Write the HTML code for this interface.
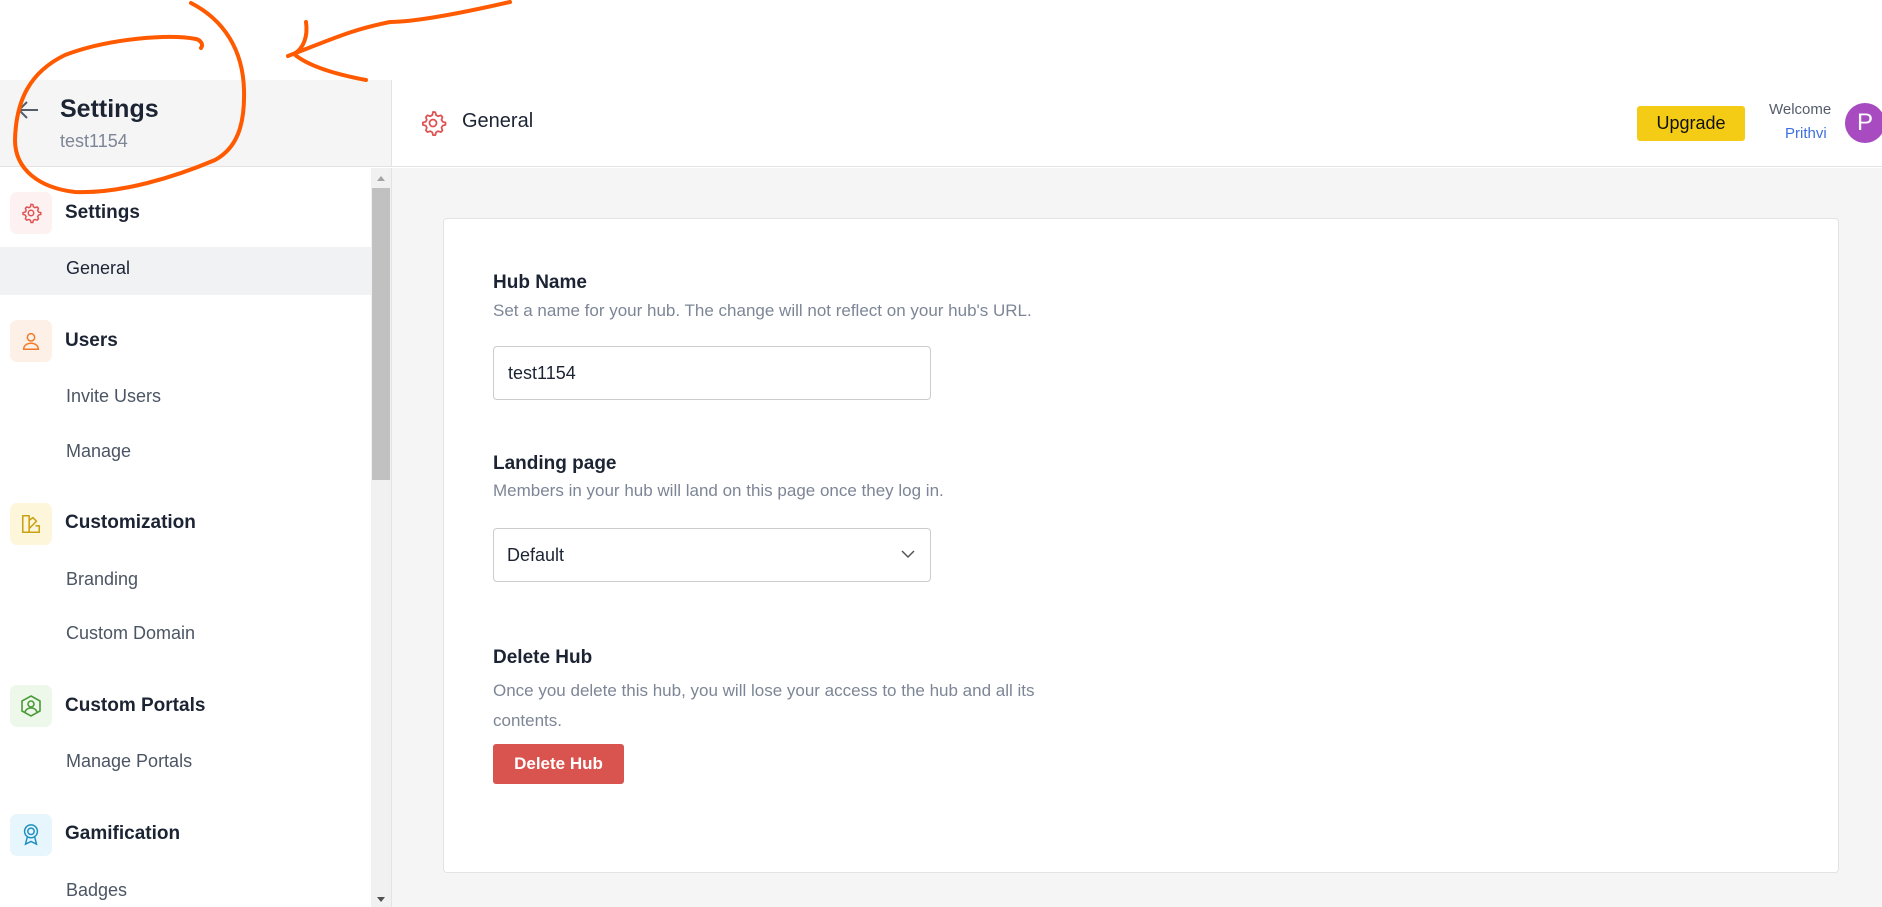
<!DOCTYPE html>
<html><head><style>
*{box-sizing:border-box;margin:0;padding:0}
body{width:1882px;height:907px;overflow:hidden;background:#fff;font-family:"Liberation Sans",sans-serif;position:relative;color:#1f2937}
.a{position:absolute;white-space:nowrap}
.ib{position:absolute;left:10px;width:42px;height:42px;border-radius:7px;display:flex;align-items:center;justify-content:center}
.h{position:absolute;left:65px;font-size:19px;font-weight:bold;color:#1c2434}
.s{position:absolute;left:66px;font-size:18px;color:#4b5563}
</style></head><body>
<div class="a" style="left:0;top:80px;width:392px;height:87px;background:#f5f5f5;border-bottom:1px solid #e3e3e3;border-right:1px solid #e3e3e3"></div>
<svg class="a" style="left:16px;top:99px" width="26" height="22" viewBox="0 0 26 22"><path d="M22 11H4M11 3L3 11l8 8" stroke="#555d6b" stroke-width="2" fill="none"/></svg>
<div class="a" style="left:60px;top:95px;font-size:25px;font-weight:bold;color:#1c2434">Settings</div>
<div class="a" style="left:60px;top:131px;font-size:18px;color:#7d8696">test1154</div>
<div class="a" style="left:392px;top:80px;width:1490px;height:87px;background:#fff;border-bottom:1px solid #e3e3e3"></div>
<svg class="a" style="left:419px;top:109px" width="28" height="28" viewBox="0 0 24 24"><path d="M12 2.5l2 .3.6 2.4 1.7 1 2.4-.8 1.4 1.5-.8 2.4 1 1.7 2.4.6v2l-2.4.6-1 1.7.8 2.4-1.4 1.5-2.4-.8-1.7 1-.6 2.4h-2l-.6-2.4-1.7-1-2.4.8-1.4-1.5.8-2.4-1-1.7-2.4-.6v-2l2.4-.6 1-1.7-.8-2.4 1.4-1.5 2.4.8 1.7-1 .6-2.4z" fill="none" stroke="#e05252" stroke-width="1.5" stroke-linejoin="round"/><circle cx="12" cy="12" r="3" fill="none" stroke="#e05252" stroke-width="1.5"/></svg>
<div class="a" style="left:462px;top:110px;font-size:20px;color:#1c2434">General</div>
<div class="a" style="left:1637px;top:106px;width:108px;height:35px;background:#f4cc16;border-radius:3px;font-size:18px;color:#111;text-align:center;line-height:35px">Upgrade</div>
<div class="a" style="left:1769px;top:101px;font-size:15px;color:#555d6b">Welcome</div>
<div class="a" style="left:1785px;top:125px;font-size:15px;color:#3f6fe0">Prithvi</div>
<div class="a" style="left:1845px;top:103px;width:40px;height:40px;border-radius:50%;background:#a84bc0;color:#fff;font-size:24px;line-height:40px;text-align:center">P</div>
<div class="a" style="left:392px;top:168px;width:1490px;height:739px;background:#f5f5f5"></div>
<div class="a" style="left:443px;top:218px;width:1396px;height:655px;background:#fff;border:1px solid #e3e3e3;border-radius:4px"></div>
<div class="a" style="left:493px;top:272px;font-size:19px;font-weight:bold;color:#1c2434">Hub Name</div>
<div class="a" style="left:493px;top:301px;font-size:17px;color:#7d8696">Set a name for your hub. The change will not reflect on your hub's URL.</div>
<div class="a" style="left:493px;top:346px;width:438px;height:54px;border:1px solid #ccc;border-radius:4px;font-size:18px;line-height:52px;padding-left:14px;color:#1c2434">test1154</div>
<div class="a" style="left:493px;top:453px;font-size:19px;font-weight:bold;color:#1c2434">Landing page</div>
<div class="a" style="left:493px;top:481px;font-size:17px;color:#7d8696">Members in your hub will land on this page once they log in.</div>
<div class="a" style="left:493px;top:528px;width:438px;height:54px;border:1px solid #ccc;border-radius:4px;font-size:18px;line-height:52px;padding-left:13px;color:#1c2434">Default</div>
<svg class="a" style="left:900px;top:548px" width="16" height="12" viewBox="0 0 16 12"><path d="M2 3l6 6 6-6" stroke="#555" stroke-width="1.5" fill="none"/></svg>
<div class="a" style="left:493px;top:647px;font-size:19px;font-weight:bold;color:#1c2434">Delete Hub</div>
<div class="a" style="left:493px;top:676px;font-size:17px;color:#7d8696;line-height:30px">Once you delete this hub, you will lose your access to the hub and all its<br>contents.</div>
<div class="a" style="left:493px;top:744px;width:131px;height:40px;background:#d9534f;border-radius:3px;color:#fff;font-size:17px;font-weight:bold;text-align:center;line-height:40px">Delete Hub</div>
<div class="a" style="left:0;top:168px;width:392px;height:739px;background:#fff;border-right:1px solid #e3e3e3"></div>
<div class="a" style="left:371px;top:168px;width:20px;height:739px;background:#f1f1f1"></div>
<div class="a" style="left:372px;top:188px;width:18px;height:292px;background:#c1c1c1"></div>
<svg class="a" style="left:375px;top:174px" width="12" height="8"><path d="M2 7L6 2l4 5z" fill="#a3a3a3"/></svg>
<svg class="a" style="left:375px;top:896px" width="12" height="8"><path d="M2 1l4 5 4-5z" fill="#505050"/></svg>
<div class="a" style="left:0;top:247px;width:371px;height:48px;background:#f1f2f4"></div>

<div class="ib" style="top:192px;background:#fdf1f1"><svg width="22" height="22" viewBox="0 0 24 24"><path d="M12 2.5l2 .3.6 2.4 1.7 1 2.4-.8 1.4 1.5-.8 2.4 1 1.7 2.4.6v2l-2.4.6-1 1.7.8 2.4-1.4 1.5-2.4-.8-1.700 1-.6 2.4h-2l-.6-2.4-1.7-1-2.4.8-1.4-1.5.8-2.4-1-1.7-2.4-.6v-2l2.4-.6 1-1.7-.8-2.4 1.4-1.5 2.4.8 1.7-1 .6-2.4z" fill="none" stroke="#e05252" stroke-width="1.6"/><circle cx="12" cy="12" r="3" fill="none" stroke="#e05252" stroke-width="1.6"/></svg></div>
<div class="h" style="top:202px">Settings</div>
<div class="s" style="top:258px;color:#1c2434">General</div>

<div class="ib" style="top:320px;background:#fdf0e6"><svg width="22" height="22" viewBox="0 0 24 24"><circle cx="12" cy="8" r="4" fill="none" stroke="#f07a2a" stroke-width="1.6"/><path d="M4 21c0-4 3.5-6.5 8-6.5s8 2.5 8 6.5z" fill="none" stroke="#f07a2a" stroke-width="1.6"/></svg></div>
<div class="h" style="top:330px">Users</div>
<div class="s" style="top:386px">Invite Users</div>
<div class="s" style="top:441px">Manage</div>

<div class="ib" style="top:503px;background:#fdf6da"><svg width="22" height="22" viewBox="0 0 24 24"><path d="M3 3h7v18H3zM10 8l4-3 4 4-8 8M10 21h11v-7h-4" fill="none" stroke="#c9a112" stroke-width="1.7" stroke-linejoin="round"/></svg></div>
<div class="h" style="top:512px">Customization</div>
<div class="s" style="top:569px">Branding</div>
<div class="s" style="top:623px">Custom Domain</div>

<div class="ib" style="top:685px;background:#eef8ea"><svg width="24" height="24" viewBox="0 0 24 24"><path d="M12 2l9 5v10l-9 5-9-5V7z" fill="none" stroke="#4a9b3a" stroke-width="1.6"/><circle cx="12" cy="10" r="3" fill="none" stroke="#4a9b3a" stroke-width="1.6"/><path d="M6 18c1-3 3.5-4 6-4s5 1 6 4" fill="none" stroke="#4a9b3a" stroke-width="1.6"/></svg></div>
<div class="h" style="top:695px">Custom Portals</div>
<div class="s" style="top:751px">Manage Portals</div>

<div class="ib" style="top:814px;background:#e7f6fc"><svg width="22" height="24" viewBox="0 0 24 26"><circle cx="12" cy="9" r="7" fill="none" stroke="#1f8fc0" stroke-width="1.6"/><circle cx="12" cy="9" r="3.5" fill="none" stroke="#1f8fc0" stroke-width="1.6"/><path d="M8 15l-2 8 6-3 6 3-2-8" fill="none" stroke="#1f8fc0" stroke-width="1.6"/></svg></div>
<div class="h" style="top:823px">Gamification</div>
<div class="s" style="top:880px">Badges</div>

<svg class="a" style="left:0;top:0" width="560" height="220" viewBox="0 0 560 220"><g fill="none" stroke="#ff5a00" stroke-width="4" stroke-linecap="round" stroke-linejoin="round"><path d="M201 48C204 44 200 40 196 39 170 34 110 38 65 55 30 72 16 100 15 140c0 30 25 48 60 52 45 2 100-15 140-32 22-12 30-35 29-70-1-40-20-70-53-87"/><path d="M510 2C475 10 420 22 390 22 350 30 330 40 288 56"/><path d="M306 22c2 14-2 26-12 32 14 12 40 20 72 26"/></g></svg>
</body></html>
